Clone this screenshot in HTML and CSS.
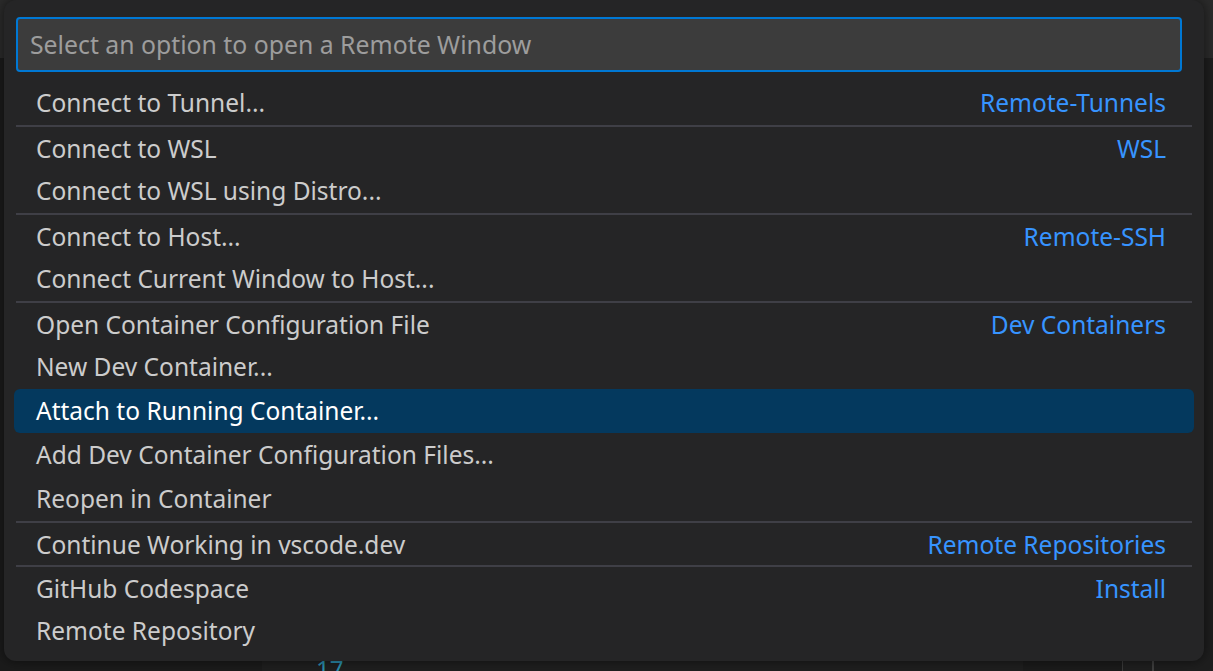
FILE: index.html
```html
<!DOCTYPE html>
<html>
<head>
<meta charset="utf-8">
<link rel="stylesheet" href="styles.css">
</head>
<body>
<div class="app">
  <div class="titlebar"></div>
  <div class="main">
    <div class="sidebar"></div>
    <div class="editor"><span class="ln">17</span></div>
    <div class="minimap"></div>
    <div class="scrollbar"></div>
    <div class="rightbar"></div>
  </div>
</div>
<div class="quick-input">
  <div class="input">Select an option to open a Remote Window</div>
  <div class="list">
    <div class="row"><div class="inner"><span class="label">Connect to Tunnel...</span><span class="desc">Remote-Tunnels</span></div></div>
    <div class="row"><div class="inner sep"><span class="label">Connect to WSL</span><span class="desc">WSL</span></div></div>
    <div class="row"><div class="inner"><span class="label">Connect to WSL using Distro...</span></div></div>
    <div class="row"><div class="inner sep"><span class="label">Connect to Host...</span><span class="desc">Remote-SSH</span></div></div>
    <div class="row"><div class="inner"><span class="label">Connect Current Window to Host...</span></div></div>
    <div class="row"><div class="inner sep"><span class="label">Open Container Configuration File</span><span class="desc">Dev Containers</span></div></div>
    <div class="row"><div class="inner"><span class="label">New Dev Container...</span></div></div>
    <div class="row active"><div class="inner"><span class="label">Attach to Running Container...</span></div></div>
    <div class="row"><div class="inner"><span class="label">Add Dev Container Configuration Files...</span></div></div>
    <div class="row"><div class="inner"><span class="label">Reopen in Container</span></div></div>
    <div class="row"><div class="inner sep"><span class="label">Continue Working in vscode.dev</span><span class="desc">Remote Repositories</span></div></div>
    <div class="row"><div class="inner sep"><span class="label">GitHub Codespace</span><span class="desc">Install</span></div></div>
    <div class="row"><div class="inner"><span class="label">Remote Repository</span></div></div>
  </div>
</div>
</body>
</html>
```
FILE: styles.css
```css
html, body {
  margin: 0;
  padding: 0;
  width: 1213px;
  height: 671px;
  overflow: hidden;
  background: #1f1f1f;
  font-family: "Noto Sans", "Open Sans", "DejaVu Sans", sans-serif;
}

.app {
  display: flex;
  flex-direction: column;
  height: 671px;
}

.titlebar {
  height: 58px;
  background: #2b2b2b;
}

.main {
  flex: 1;
  display: flex;
  background: #1f1f1f;
}

.sidebar {
  width: 262px;
  background: #1b1b1b;
}

.editor {
  flex: 1;
  background: #1f1f1f;
  position: relative;
}

.ln {
  position: absolute;
  left: 54px;
  bottom: -14px;
  font-size: 24px;
  color: #2b8fb0;
}

.minimap {
  width: 99px;
  background: #1b1b1b;
}

.scrollbar {
  width: 29px;
  background: #1f1f1f;
  border-left: 1px solid #3a3a3a;
}

.rightbar {
  width: 59px;
  background: #1e1e1e;
  border-left: 2px solid #3f3f3f;
}

.quick-input {
  position: absolute;
  left: 4px;
  top: 0;
  width: 1200px;
  height: 661px;
  box-sizing: border-box;
  padding: 17px 0 8px 0;
  background: #252526;
  border-radius: 12px;
  box-shadow: 0 0 12px rgba(0, 0, 0, 0.55);
}

.input {
  margin-left: 12px;
  width: 1166px;
  height: 55px;
  box-sizing: border-box;
  border: 2px solid #0078d4;
  border-radius: 4px;
  background: #3c3c3c;
  color: #9d9d9d;
  font-size: 24.8px;
  padding: 0 12px 1px 12px;
  display: flex;
  align-items: center;
}

.list {
  margin-top: 9px;
  padding: 0 10px;
}

.row {
  height: 44px;
  padding: 0 2px;
  border-radius: 6px;
}

.row.active {
  background: #04395e;
}

.inner {
  height: 44px;
  box-sizing: border-box;
  padding: 0 26px 2px 20px;
  display: flex;
  align-items: center;
  justify-content: space-between;
  font-size: 24.5px;
  color: #cccccc;
}

.inner.sep {
  border-top: 2px solid #3f3f46;
  padding-top: 2px;
}

.row.active .inner {
  color: #ffffff;
}

.desc {
  color: #3794ff;
}
```
